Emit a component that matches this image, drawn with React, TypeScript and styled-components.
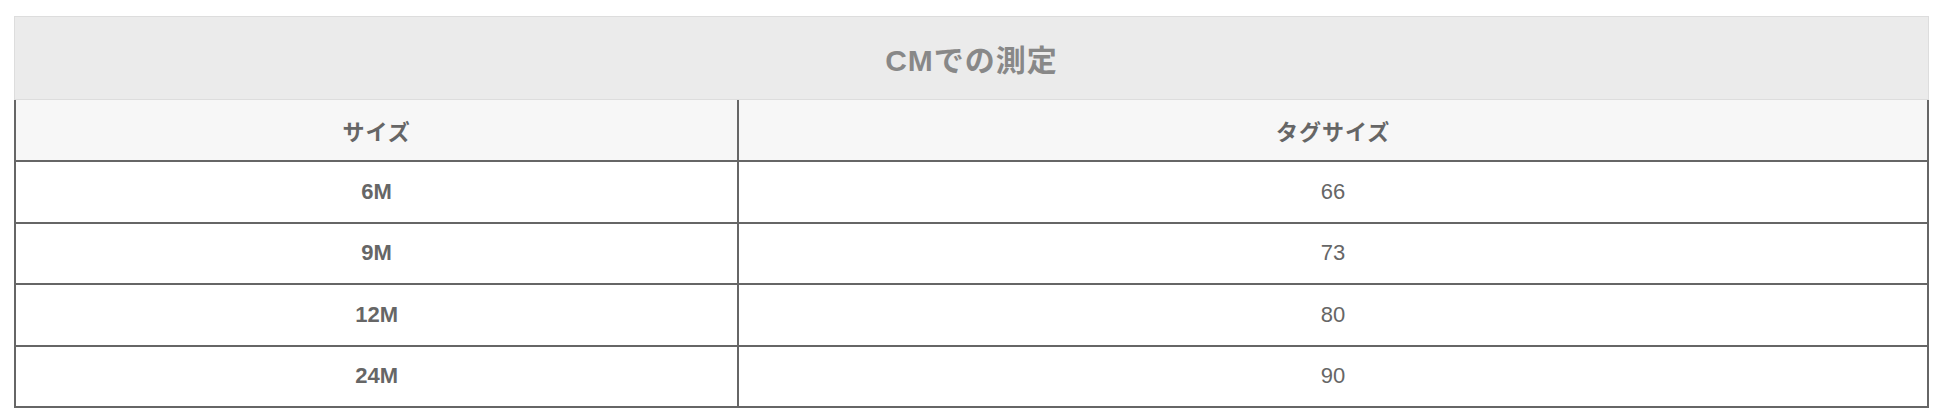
import React from 'react';
import styled, { createGlobalStyle } from 'styled-components';

const GlobalStyle = createGlobalStyle`
  html, body {
    margin: 0;
    padding: 0;
    background: #ffffff;
    font-family: "Liberation Sans", "Noto Sans CJK JP", Arial, sans-serif;
  }
`;

const Page = styled.div`
  padding: 16px 17px 0 14px;
`;

const Title = styled.div`
  height: 82px;
  display: flex;
  align-items: center;
  justify-content: center;
  background: #ebebeb;
  border: 1px solid #dddddd;
  color: #888888;
  font-size: 30px;
  font-weight: 700;
  letter-spacing: 1px;
`;

const Table = styled.table`
  width: 100%;
  border-collapse: collapse;
  table-layout: fixed;
  color: #666666;
  font-size: 22px;
`;

const HeadCell = styled.th`
  height: 60px;
  padding: 0;
  background: #f7f7f7;
  border: 2px solid #666666;
  border-top: none;
  font-weight: 700;
  letter-spacing: 1px;
  text-align: center;
`;

const Cell = styled.td<{ $bold?: boolean }>`
  height: 59.5px;
  padding: 0;
  border: 2px solid #666666;
  text-align: center;
  font-weight: ${(p) => (p.$bold ? 700 : 400)};
`;

const rows = [
  { size: '6M', tag: '66' },
  { size: '9M', tag: '73' },
  { size: '12M', tag: '80' },
  { size: '24M', tag: '90' },
];

export default function App() {
  return (
    <Page>
      <GlobalStyle />
      <Title>CMでの測定</Title>
      <Table>
        <colgroup>
          <col style={{ width: '37.8%' }} />
          <col />
        </colgroup>
        <thead>
          <tr>
            <HeadCell>サイズ</HeadCell>
            <HeadCell>タグサイズ</HeadCell>
          </tr>
        </thead>
        <tbody>
          {rows.map((r) => (
            <tr key={r.size}>
              <Cell $bold>{r.size}</Cell>
              <Cell>{r.tag}</Cell>
            </tr>
          ))}
        </tbody>
      </Table>
    </Page>
  );
}
